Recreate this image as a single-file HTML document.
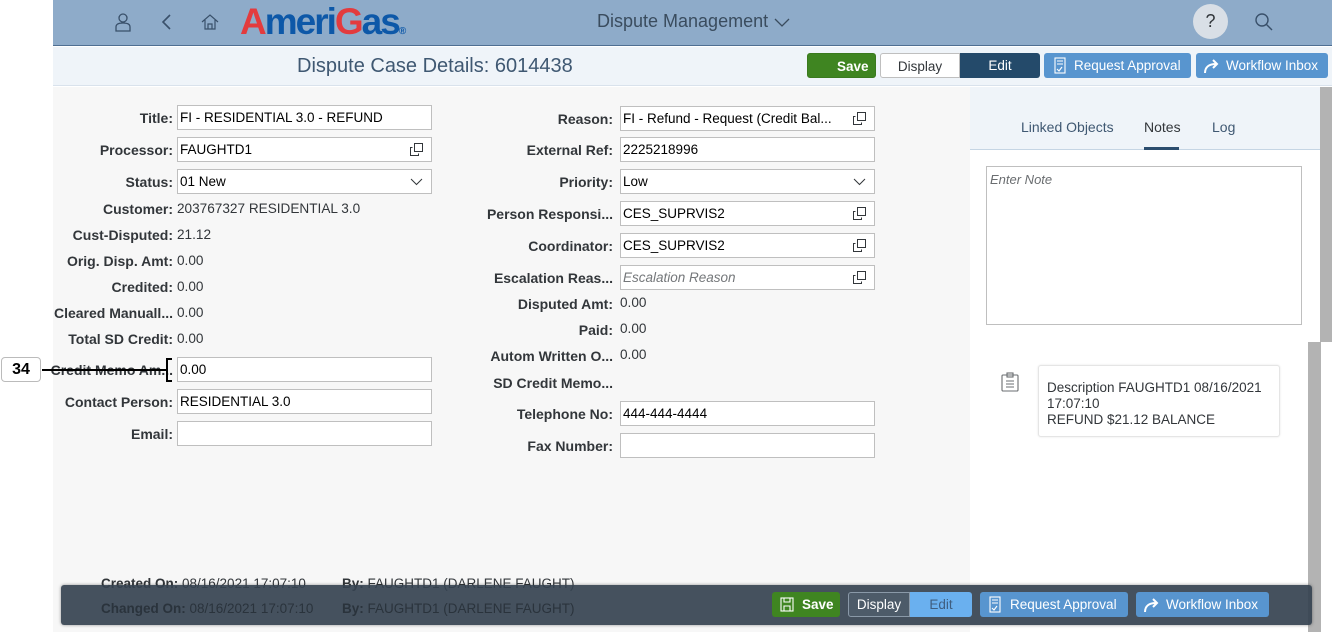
<!DOCTYPE html>
<html><head><meta charset="utf-8"><style>
*{margin:0;padding:0;box-sizing:border-box}
body{width:1332px;height:632px;overflow:hidden;background:#fff;font-family:"Liberation Sans",Arial,sans-serif;position:relative;color:#32363a}
.a{position:absolute}
.lab{position:absolute;font-size:14px;font-weight:bold;color:#32363a;text-align:right;white-space:nowrap;line-height:16px}
.val{position:absolute;font-size:13.6px;color:#32363a;white-space:nowrap;line-height:16px}
.inp{position:absolute;height:25px;background:#fff;border:1px solid #bfbfbf;font-size:13.5px;color:#000;line-height:23px;padding-left:2px;white-space:nowrap;overflow:hidden}
.ic{position:absolute;right:8px;top:5px;width:13px;height:13px}
.btn{position:absolute;height:25px;font-size:13.5px;line-height:25px;border-radius:3px;color:#fff;white-space:nowrap}
</style></head><body>
<div class="a" style="left:53px;top:0;width:1279px;height:46px;background:#8eabc9;border-bottom:1px solid #4f6f92"></div>
<svg class="a" style="left:113px;top:12px" width="20" height="20" viewBox="0 0 20 20" fill="none" stroke="#39506a" stroke-width="1.3"><circle cx="10" cy="6" r="4"/><path d="M3 19v-4c0-3 3-4 7-4s7 1 7 4v4z"/></svg>
<svg class="a" style="left:160px;top:13px" width="14" height="18" viewBox="0 0 14 18" fill="none" stroke="#39506a" stroke-width="1.6"><path d="M10 2L3 9l7 7"/></svg>
<svg class="a" style="left:200px;top:12px" width="20" height="20" viewBox="0 0 20 20" fill="none" stroke="#39506a" stroke-width="1.2"><path d="M2 10L10 3l8 7M5 8v9h10V8M8 17v-5h4v5"/></svg>
<div class="a" style="left:240px;top:2px;font-family:'Liberation Sans',sans-serif;font-weight:bold;font-size:37px;letter-spacing:-2px;line-height:40px"><span style="color:#e33b3e">A</span><span style="color:#0d58a8">meri</span><span style="color:#e33b3e">G</span><span style="color:#0d58a8">as</span><span style="color:#0d58a8;font-size:10px;letter-spacing:0">®</span></div>
<div class="a" style="left:597px;top:11px;font-size:18px;color:#3a4c5e">Dispute Management</div>
<svg class="a" style="left:774px;top:18px" width="16" height="10" viewBox="0 0 16 10" fill="none" stroke="#3a4c5e" stroke-width="1.3"><path d="M1 1l7 7 7-7"/></svg>
<div class="a" style="left:1193px;top:4px;width:35px;height:35px;border-radius:50%;background:#d9dfe6;color:#32363a;font-size:18px;text-align:center;line-height:35px">?</div>
<svg class="a" style="left:1254px;top:12px" width="20" height="20" viewBox="0 0 20 20" fill="none" stroke="#39506a" stroke-width="1.4"><circle cx="8" cy="8" r="6"/><path d="M12.5 12.5L18 18"/></svg>
<div class="a" style="left:53px;top:47px;width:1279px;height:39px;background:#eff4f9;border-bottom:1px solid #d9e2ec"></div>
<div class="a" style="left:297px;top:55px;font-size:20px;color:#3f5872">Dispute Case Details: 6014438</div>
<div class="btn" style="left:807px;top:53px;width:69px;background:#3f8521;border:1px solid #3a7a1e;font-weight:bold;padding-left:29px">Save</div>
<div class="btn" style="left:880px;top:53px;width:80px;background:#fff;border:1px solid #bfbfbf;border-radius:3px 0 0 3px;color:#32363a;text-align:center">Display</div>
<div class="btn" style="left:960px;top:53px;width:80px;background:#244a6a;border-radius:0 3px 3px 0;text-align:center">Edit</div>
<div class="btn" style="left:1044px;top:53px;width:147px;background:#5895cf;padding-left:30px">Request Approval</div>
<svg class="a" style="left:1054px;top:57px" width="12" height="17" viewBox="0 0 12 17" fill="none" stroke="#fff" stroke-width="1.1"><rect x="1" y="1" width="10" height="15"/><path d="M3 4h6M3 7h6M3 12l2 2 3-4"/></svg>
<div class="btn" style="left:1196px;top:53px;width:132px;background:#5895cf;padding-left:30px">Workflow Inbox</div>
<svg class="a" style="left:1203px;top:57px" width="18" height="17" viewBox="0 0 18 17" fill="none" stroke="#fff" stroke-width="2"><path d="M2 16c0-6 4-9 11-9M10 3l4 4-4 4"/></svg>
<div class="a" style="left:53px;top:87px;width:917px;height:545px;background:#f7f7f7"></div>
<div class="a" style="left:970px;top:87px;width:350px;height:545px;background:#fff"></div>
<div class="a" style="left:970px;top:87px;width:350px;height:63px;background:#eff4f9;border-bottom:1px solid #c5d5e4"></div>
<div class="a" style="left:1320px;top:87px;width:12px;height:255px;background:#b3b3b3"></div>
<div class="a" style="left:1308px;top:342px;width:13px;height:290px;background:#b3b3b3"></div>
<div class="a" style="left:1021px;top:119px;font-size:14px;color:#3f5872">Linked Objects</div>
<div class="a" style="left:1144px;top:119px;font-size:14px;color:#32363a">Notes</div>
<div class="a" style="left:1144px;top:147px;width:35px;height:3px;background:#2b4d6e"></div>
<div class="a" style="left:1212px;top:119px;font-size:14px;color:#3f5872">Log</div>
<div class="a" style="left:986px;top:166px;width:316px;height:159px;border:1px solid #bfbfbf;background:#fff"></div>
<div class="a" style="left:990px;top:172px;font-size:13px;font-style:italic;color:#6a6d70">Enter Note</div>
<svg class="a" style="left:1001px;top:372px" width="18" height="20" viewBox="0 0 18 20" fill="none" stroke="#6a6d70" stroke-width="1.1"><rect x="1" y="3" width="16" height="16" rx="1"/><rect x="6" y="1" width="6" height="4"/><path d="M5 9h8M5 12h8M5 15h8"/></svg>
<div class="a" style="left:1038px;top:365px;width:242px;height:72px;background:#fff;border:1px solid #e5e5e5;border-radius:3px;box-shadow:0 0 2px rgba(0,0,0,.1)"></div>
<div class="a" style="left:1047px;top:380px;font-size:13.5px;line-height:16px;color:#32363a">Description FAUGHTD1 08/16/2021<br>17:07:10<br>REFUND $21.12 BALANCE</div>

<div class="lab" style="right:1159px;top:110px">Title:</div>
<div class="inp" style="left:177px;top:105px;width:255px">FI - RESIDENTIAL 3.0 - REFUND</div>
<div class="lab" style="right:1159px;top:142px">Processor:</div>
<div class="inp" style="left:177px;top:137px;width:255px">FAUGHTD1<svg class="ic" viewBox="0 0 13 13" fill="none" stroke="#32363a"><rect x="4.5" y="0.5" width="8" height="8"/><path d="M2.5 4.5h-2v8h8v-2"/></svg></div>
<div class="lab" style="right:1159px;top:174px">Status:</div>
<div class="inp" style="left:177px;top:169px;width:255px">01 New<svg class="ic" viewBox="0 0 13 13" fill="none" stroke="#32363a"><path d="M1 4l5.5 5.5L12 4"/></svg></div>
<div class="lab" style="right:1159px;top:201px">Customer:</div><div class="val" style="left:177px;top:201px">203767327 RESIDENTIAL 3.0</div>
<div class="lab" style="right:1159px;top:227px">Cust-Disputed:</div><div class="val" style="left:177px;top:227px">21.12</div>
<div class="lab" style="right:1159px;top:253px">Orig. Disp. Amt:</div><div class="val" style="left:177px;top:253px">0.00</div>
<div class="lab" style="right:1159px;top:279px">Credited:</div><div class="val" style="left:177px;top:279px">0.00</div>
<div class="lab" style="right:1159px;top:305px">Cleared Manuall...</div><div class="val" style="left:177px;top:305px">0.00</div>
<div class="lab" style="right:1159px;top:331px">Total SD Credit:</div><div class="val" style="left:177px;top:331px">0.00</div>
<div class="lab" style="right:1159px;top:362px">Credit Memo Am...</div>
<div class="inp" style="left:177px;top:357px;width:255px">0.00</div>
<div class="lab" style="right:1159px;top:394px">Contact Person:</div>
<div class="inp" style="left:177px;top:389px;width:255px">RESIDENTIAL 3.0</div>
<div class="lab" style="right:1159px;top:426px">Email:</div>
<div class="inp" style="left:177px;top:421px;width:255px"></div>
<div class="a" style="left:1px;top:357px;width:40px;height:25px;border:1px solid #bbb;border-radius:4px;background:#fff;font-weight:bold;font-size:16px;text-align:center;line-height:23px;color:#000">34</div>
<div class="a" style="left:42px;top:369px;width:126px;height:2px;background:#000"></div>
<div class="a" style="left:166px;top:358px;width:6px;height:24px;border:2px solid #000;border-right:none"></div>

<div class="lab" style="right:719px;top:111px">Reason:</div>
<div class="inp" style="left:620px;top:106px;width:255px">FI - Refund - Request (Credit Bal...<svg class="ic" viewBox="0 0 13 13" fill="none" stroke="#32363a"><rect x="4.5" y="0.5" width="8" height="8"/><path d="M2.5 4.5h-2v8h8v-2"/></svg></div>
<div class="lab" style="right:719px;top:142px">External Ref:</div>
<div class="inp" style="left:620px;top:137px;width:255px">2225218996</div>
<div class="lab" style="right:719px;top:174px">Priority:</div>
<div class="inp" style="left:620px;top:169px;width:255px">Low<svg class="ic" viewBox="0 0 13 13" fill="none" stroke="#32363a"><path d="M1 4l5.5 5.5L12 4"/></svg></div>
<div class="lab" style="right:719px;top:206px">Person Responsi...</div>
<div class="inp" style="left:620px;top:201px;width:255px">CES_SUPRVIS2<svg class="ic" viewBox="0 0 13 13" fill="none" stroke="#32363a"><rect x="4.5" y="0.5" width="8" height="8"/><path d="M2.5 4.5h-2v8h8v-2"/></svg></div>
<div class="lab" style="right:719px;top:238px">Coordinator:</div>
<div class="inp" style="left:620px;top:233px;width:255px">CES_SUPRVIS2<svg class="ic" viewBox="0 0 13 13" fill="none" stroke="#32363a"><rect x="4.5" y="0.5" width="8" height="8"/><path d="M2.5 4.5h-2v8h8v-2"/></svg></div>
<div class="lab" style="right:719px;top:270px">Escalation Reas...</div>
<div class="inp" style="left:620px;top:265px;width:255px;color:#74777a;font-style:italic">Escalation Reason<svg class="ic" viewBox="0 0 13 13" fill="none" stroke="#32363a"><rect x="4.5" y="0.5" width="8" height="8"/><path d="M2.5 4.5h-2v8h8v-2"/></svg></div>
<div class="lab" style="right:719px;top:296px">Disputed Amt:</div><div class="val" style="left:620px;top:295px">0.00</div>
<div class="lab" style="right:719px;top:322px">Paid:</div><div class="val" style="left:620px;top:321px">0.00</div>
<div class="lab" style="right:719px;top:348px">Autom Written O...</div><div class="val" style="left:620px;top:347px">0.00</div>
<div class="lab" style="right:719px;top:375px">SD Credit Memo...</div>
<div class="lab" style="right:719px;top:406px">Telephone No:</div>
<div class="inp" style="left:620px;top:401px;width:255px">444-444-4444</div>
<div class="lab" style="right:719px;top:438px">Fax Number:</div>
<div class="inp" style="left:620px;top:433px;width:255px"></div>

<div class="a" style="left:101px;top:576px;font-size:13.5px;color:#32363a"><b>Created On:</b> 08/16/2021 17:07:10</div>
<div class="a" style="left:342px;top:576px;font-size:13.5px;color:#32363a"><b>By:</b> FAUGHTD1 (DARLENE FAUGHT)</div>
<div class="a" style="left:61px;top:585px;width:1251px;height:40px;background:rgba(53,66,80,0.92);border-radius:3px;box-shadow:0 0 3px rgba(0,0,0,.4)"></div>
<div class="a" style="left:101px;top:601px;font-size:13.5px;color:#2a333c"><b>Changed On:</b> 08/16/2021 17:07:10</div>
<div class="a" style="left:342px;top:601px;font-size:13.5px;color:#2a333c"><b>By:</b> FAUGHTD1 (DARLENE FAUGHT)</div>
<div class="btn" style="left:772px;top:592px;width:68px;background:#3f8521;font-weight:bold;padding-left:30px">Save</div>
<svg class="a" style="left:780px;top:597px" width="14" height="15" viewBox="0 0 14 15" fill="none" stroke="#fff" stroke-width="1.1"><rect x="1" y="1" width="12" height="13"/><path d="M4 1v4h6V1M4 14V9h6v5"/></svg>
<div class="btn" style="left:848px;top:592px;width:62px;background:#4d5b69;border:1px solid #8a99a8;border-radius:3px 0 0 3px;color:#fff;text-align:center;line-height:23px">Display</div>
<div class="btn" style="left:910px;top:592px;width:62px;background:#6ab0ef;border-radius:0 3px 3px 0;text-align:center;color:#3f5e80">Edit</div>
<div class="btn" style="left:980px;top:592px;width:148px;background:#5895cf;padding-left:30px">Request Approval</div>
<svg class="a" style="left:989px;top:596px" width="12" height="17" viewBox="0 0 12 17" fill="none" stroke="#fff" stroke-width="1.1"><rect x="1" y="1" width="10" height="15"/><path d="M3 4h6M3 7h6M3 12l2 2 3-4"/></svg>
<div class="btn" style="left:1136px;top:592px;width:133px;background:#5895cf;padding-left:30px">Workflow Inbox</div>
<svg class="a" style="left:1143px;top:596px" width="18" height="17" viewBox="0 0 18 17" fill="none" stroke="#fff" stroke-width="2"><path d="M2 16c0-6 4-9 11-9M10 3l4 4-4 4"/></svg>
</body></html>
